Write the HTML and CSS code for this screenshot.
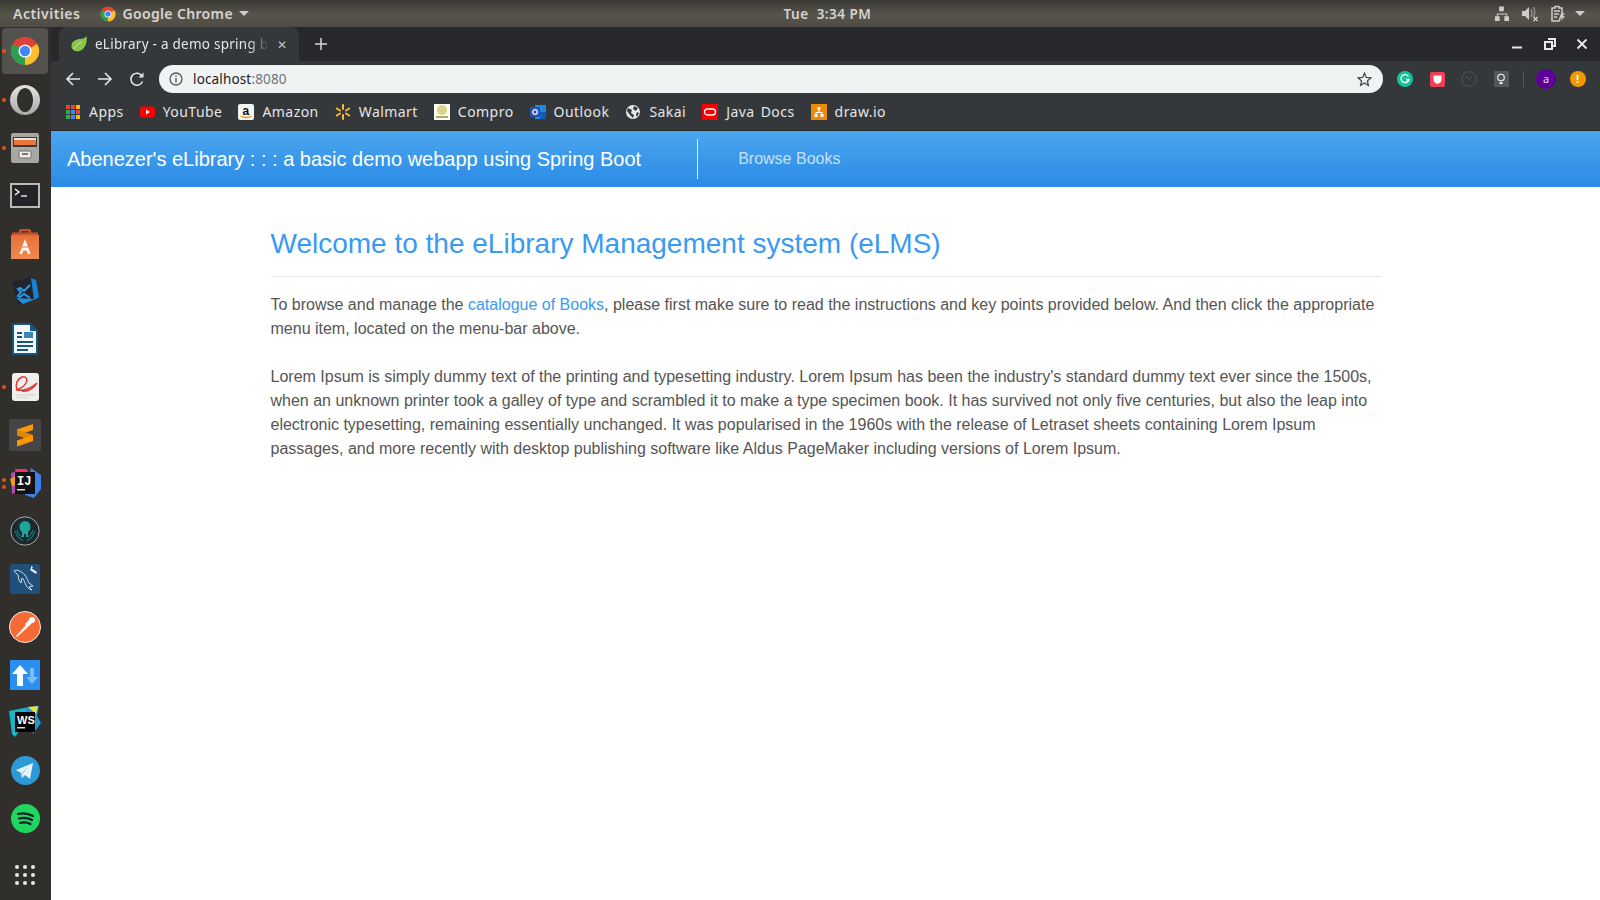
FILE: index.html
```html
<!DOCTYPE html>
<html lang="en">
<head>
    <meta charset="UTF-8">
    <title>eLibrary - a demo spring b</title>
    <link rel="stylesheet" href="styles.css">
</head>
<body>
    <svg class="defs" width="0" height="0">
        <defs>
            <linearGradient id="operaRing" x1="0" y1="0" x2="0" y2="1">
                <stop offset="0" stop-color="#e4e4e4"/>
                <stop offset="1" stop-color="#a8a8a8"/>
            </linearGradient>
            <linearGradient id="bagFill" x1="0" y1="0" x2="0" y2="1">
                <stop offset="0" stop-color="#e8703a"/>
                <stop offset="1" stop-color="#f08a50"/>
            </linearGradient>
        </defs>
        <symbol id="chrome" viewBox="0 0 32 32">
            <circle cx="16" cy="16" r="15" fill="#db4437"/>
            <path d="M16 16 L29 8.500 A15 15 0 0 1 16 31 Z" fill="#fbc02d"/>
            <path d="M16 16 L16 31 A15 15 0 0 1 3 8.500 Z" fill="#2e9e4f"/>
            <circle cx="16" cy="16" r="7" fill="#fff"/>
            <circle cx="16" cy="16" r="5.500" fill="#4285f4"/>
        </symbol>
    </svg>

    <div id="topbar">
        <div class="top-left">
            <span class="activities">Activities</span>
            <svg class="top-chrome" width="16" height="16"><use href="#chrome"/></svg>
            <span class="app-name">Google Chrome</span>
            <i class="caret"></i>
        </div>
        <div class="clock">Tue&nbsp; 3:34 PM</div>
        <div class="top-right">
            <svg width="15" height="16" viewBox="0 0 16 16" fill="#cfcdc8"><path d="M5.500 0h5v5h-2v2.500h5.500v3h2v5h-5v-5h2v-2h-9v2h2v5h-5v-5h2v-3h5.500v-2.500h-3z"/></svg>
            <svg width="18" height="16" viewBox="0 0 18 16" fill="#cfcdc8"><path d="M1 5h3l4-4v13l-4-4h-3z"/><path d="M10 3q2 4 0 8M12.500 1q2.500 5 0 10" fill="none" stroke="#8c8a85" stroke-width="1.500"/><path d="M12.500 11l4 4m0-4l-4 4" stroke="#cfcdc8" stroke-width="1.500"/></svg>
            <svg width="15" height="17" viewBox="0 0 15 17"><path d="M4 1.500h4v1.500h3v5l-3 8h-7v-13h3z" fill="none" stroke="#cfcdc8" stroke-width="1.500"/><path d="M3 6h6M3 9h5M3 12h3" stroke="#cfcdc8" stroke-width="1.300"/><path d="M12 8l-3 4.500h2l-1 3.500 4-5h-2l1.500-3z" fill="#cfcdc8"/></svg>
            <i class="caret caret-right"></i>
        </div>
    </div>

    <div id="desktop">
        <div id="dock">
            <div class="dock-item active"><i class="dot"></i>
                <svg width="30" height="30"><use href="#chrome"/></svg>
            </div>
            <div class="dock-item"><i class="dot"></i>
                <svg width="30" height="30" viewBox="0 0 30 30"><path fill-rule="evenodd" d="M15 0a15 15 0 1 0 .01 0zM15 3a8 12 0 1 0 .01 0z" fill="url(#operaRing)"/></svg>
            </div>
            <div class="dock-item"><i class="dot"></i>
                <svg width="28" height="30" viewBox="0 0 28 30"><rect width="28" height="30" rx="2" fill="#a9a7a2"/><rect x="2" y="4" width="24" height="10" fill="#3c3a37"/><rect x="3" y="5" width="22" height="3" fill="#e9e4da"/><rect x="3" y="7" width="22" height="5" fill="#e8763d"/><rect x="8" y="18" width="12" height="7" rx="1" fill="#eeeeea" stroke="#6e6c68"/><rect x="11" y="20" width="6" height="2" fill="#77756f"/></svg>
            </div>
            <div class="dock-item">
                <svg width="30" height="25" viewBox="0 0 30 25"><rect x="1" y="1" width="28" height="23" fill="#222427" stroke="#b9b9b6" stroke-width="2"/><path d="M5 6l4 3-4 3" fill="none" stroke="#fff" stroke-width="1.300"/><path d="M11 13h6" stroke="#fff" stroke-width="1.300"/></svg>
            </div>
            <div class="dock-item">
                <svg width="28" height="30" viewBox="0 0 28 30"><path d="M9 7v-4q0-2 2-2h6q2 0 2 2v4" fill="none" stroke="#c9522a" stroke-width="2.500"/><path d="M1 3.500h26v3h-26z" fill="#c9522a"/><path d="M0 6h28v24h-28z" fill="url(#bagFill)"/><path d="M14 10l5.500 15h-2.500l-1.200-3.500h-3.600l-1.200 3.500h-2.500z" fill="#fff"/><path d="M7 18h14" stroke="#f08a50" stroke-width="1.200"/></svg>
            </div>
            <div class="dock-item">
                <svg width="27" height="28" viewBox="0 0 27 28"><path d="M0 5l19-5 5 4 3 16-5 3-16 5z" fill="#1f2530"/><path d="M19 1l5 2 3 17-5 3z" fill="#1683d0"/><path d="M4 21l18 1 4-1-15 6z" fill="#1e8fd8"/><path d="M18 8l-6 6-4-3-2 1 3 3-3 4 2 1 4-3 6 4" fill="none" stroke="#2a9be0" stroke-width="2"/></svg>
            </div>
            <div class="dock-item">
                <svg width="26" height="32" viewBox="0 0 26 32"><path d="M1 1h17l7 7v23h-24z" fill="#f4f6f7" stroke="#17577f" stroke-width="2"/><path d="M18 1l7 7h-7z" fill="#17577f"/><rect x="5" y="9" width="5" height="2" fill="#17577f"/><rect x="5" y="13" width="5" height="2" fill="#17577f"/><rect x="12" y="9" width="9" height="6" fill="#3a86b7"/><rect x="5" y="18" width="16" height="2" fill="#17577f"/><rect x="5" y="22" width="16" height="2" fill="#17577f"/><rect x="5" y="26" width="11" height="2" fill="#17577f"/></svg>
            </div>
            <div class="dock-item"><i class="dot"></i>
                <svg width="27" height="28" viewBox="0 0 27 28"><rect width="27" height="28" rx="3" fill="#efefed"/><path d="M5 17c-2-5 0-11 5-13 4-1 6 2 4 6s-7 6-10 7c6 1 15-1 21-7-3 5-9 9-15 8" fill="none" stroke="#dc3f3c" stroke-width="1.500"/><rect x="4" y="21.500" width="19" height="1" fill="#cfcfcd"/><rect x="4" y="24" width="13" height="1" fill="#d8d8d6"/></svg>
            </div>
            <div class="dock-item">
                <svg width="32" height="32" viewBox="0 0 32 32"><rect width="32" height="32" rx="2" fill="#454545"/><path d="M24 5v6L8 16.500v-6z" fill="#ff9800"/><path d="M8 10.500l16 5.500v6L8 16.500z" fill="#e08600"/><path d="M24 16v6L8 27.500v-6z" fill="#ff9800"/></svg>
            </div>
            <div class="dock-item two-dots"><i class="dot"></i><i class="dot dot-b"></i>
                <svg width="32" height="32" viewBox="0 0 32 32"><path d="M2 6l10-3-2 22-7 2z" fill="#b04fa8"/><path d="M6 2l12 0 2 6-12 8z" fill="#f0306e"/><path d="M1 12l6-3 2 9-6 1z" fill="#f49a20"/><path d="M22 1l10 7v14l-7 9-9-3z" fill="#3f7de8"/><rect x="6" y="5" width="20" height="22" fill="#111"/><text x="8" y="18" class="ij-text">IJ</text><rect x="8" y="22" width="8" height="1.500" fill="#ddd"/></svg>
            </div>
            <div class="dock-item">
                <svg width="30" height="30" viewBox="0 0 30 30"><circle cx="15" cy="15" r="14.200" fill="#1a2a30" stroke="#a8aaa9" stroke-width="1"/><path d="M15 5c3.500 0 5.500 3 5.500 6 0 2-1 4-2.500 5v5h-2v-3h-2v3h-2v-5c-1.500-1-2.500-3-2.500-5 0-3 2-6 5.500-6z" fill="#1fa498"/><path d="M5 15q2 7 8 10M25 15q-2 7-8 10M7 14q1 5 5 7M23 14q-1 5-5 7" fill="none" stroke="#1a8d84" stroke-width="1"/></svg>
            </div>
            <div class="dock-item">
                <svg width="30" height="30" viewBox="0 0 30 30"><rect width="30" height="30" rx="3" fill="#21507a"/><path d="M4 7c3-2 7 0 11 4 2 3 3 6 4 8l4 3-4 1 3 3c-4-1-6-4-7-7-1-2-1-4-3-5l-1 5-2-3-1-5z" fill="none" stroke="#cfdde8" stroke-width="1"/><path d="M21 4l6 4-1 2-6-4zM21 2l2 1-2 3z" fill="#e4ecf1"/></svg>
            </div>
            <div class="dock-item">
                <svg width="32" height="32" viewBox="0 0 32 32"><circle cx="16" cy="16" r="15.500" fill="#f76935" stroke="#f5ede6"/><path d="M7 25l10-11 2 2-11 10z" fill="#fff"/><path d="M16 13l6-6 3 3-6 6z" fill="#fff"/><circle cx="23" cy="9" r="3" fill="#fff"/></svg>
            </div>
            <div class="dock-item">
                <svg width="30" height="30" viewBox="0 0 30 30"><rect width="30" height="30" rx="1" fill="#2a8fef"/><path d="M10 5l8 9h-5v12h-6v-12h-5z" fill="#fff"/><path d="M20 8h4v9h4l-6 7-6-7h4z" fill="#7ebcf5"/></svg>
            </div>
            <div class="dock-item">
                <svg width="32" height="32" viewBox="0 0 32 32"><path d="M0 5l20-4 3 5-17 25-3-3z" fill="#18b6c9"/><path d="M16 2l14-2-2 10 4 7-8 11z" fill="#1e9bd6"/><path d="M19 1l10-1-2 8z" fill="#e8e54a"/><rect x="6" y="6" width="20" height="20" fill="#000"/><text x="8" y="18" class="ws-text">WS</text><rect x="8" y="21" width="8" height="1.500" fill="#ddd"/></svg>
            </div>
            <div class="dock-item">
                <svg width="29" height="29" viewBox="0 0 29 29"><circle cx="14.500" cy="14.500" r="14.500" fill="#2c9ad6"/><path d="M5 14l17-7-3 16-5-4-3 3-1-5z" fill="#e8f4fb"/><path d="M10 17l8-7-6 8-1 4z" fill="#bcd9ea"/></svg>
            </div>
            <div class="dock-item">
                <svg width="29" height="29" viewBox="0 0 29 29"><circle cx="14.500" cy="14.500" r="14.500" fill="#1ed760"/><path d="M7 10q8-2 15 2M8 14.500q7-2 13 1.500M9 19q5.500-1.500 10.500 1" fill="none" stroke="#16202a" stroke-width="2.200" stroke-linecap="round"/></svg>
            </div>
            <div class="dock-item show-apps">
                <svg width="20" height="20" viewBox="0 0 20 20" fill="#e6e5e2"><circle cx="2" cy="2" r="2"/><circle cx="10" cy="2" r="2"/><circle cx="18" cy="2" r="2"/><circle cx="2" cy="10" r="2"/><circle cx="10" cy="10" r="2"/><circle cx="18" cy="10" r="2"/><circle cx="2" cy="18" r="2"/><circle cx="10" cy="18" r="2"/><circle cx="18" cy="18" r="2"/></svg>
            </div>
        </div>

        <div id="window">
            <div id="tabstrip">
                <div class="tab">
                    <svg width="16" height="16" viewBox="0 0 16 16"><path d="M15.500 0c1 6-1 13-7 15-4 1-8-1-8-5 0-5 5-7 9-7 2 0 5-1 6-3z" fill="#8bc34a"/><path d="M3 13c2-4 5-6 8-7" fill="none" stroke="#d9efb5" stroke-width=".8"/></svg>
                    <span class="tab-title">eLibrary - a demo spring b</span>
                    <span class="tab-close">&#x2715;</span>
                </div>
                <svg class="new-tab" width="12" height="12" viewBox="0 0 12 12"><path d="M6 0v12M0 6h12" stroke="#d5d7d9" stroke-width="1.500"/></svg>
                <div class="win-btns">
                    <svg width="12" height="12" viewBox="0 0 12 12"><path d="M1 9.500h10" stroke="#e8e8e8" stroke-width="2"/></svg>
                    <svg width="12" height="12" viewBox="0 0 12 12"><path d="M4 1h7v7h-3M1 4h7v7h-7z" fill="none" stroke="#e8e8e8" stroke-width="2"/></svg>
                    <svg width="12" height="12" viewBox="0 0 12 12"><path d="M1.500 1.500l9 9m0-9l-9 9" stroke="#e8e8e8" stroke-width="1.800"/></svg>
                </div>
            </div>

            <div id="toolbar">
                <svg class="nav-icon" width="16" height="16" viewBox="0 0 16 16"><path d="M15 8h-13M8 2l-6 6 6 6" fill="none" stroke="#e4e6e8" stroke-width="1.600"/></svg>
                <svg class="nav-icon" width="16" height="16" viewBox="0 0 16 16"><path d="M1 8h13M8 2l6 6-6 6" fill="none" stroke="#e4e6e8" stroke-width="1.600"/></svg>
                <svg class="nav-icon reload" width="16" height="16" viewBox="0 0 16 16"><path d="M13.500 10.500a6 6 0 1 1-.5-5.500" fill="none" stroke="#e4e6e8" stroke-width="1.600"/><path d="M14.500 1.500v5h-5z" fill="#e4e6e8"/></svg>
                <div id="omnibox">
                    <svg width="14" height="14" viewBox="0 0 14 14"><circle cx="7" cy="7" r="6" fill="none" stroke="#55585c" stroke-width="1.300"/><path d="M7 6v4.500M7 3.200v1.600" stroke="#55585c" stroke-width="1.400"/></svg>
                    <span class="url">localhost<span class="port">:8080</span></span>
                    <svg class="star" width="15" height="15" viewBox="0 0 15 15"><path d="M7.500 1.300l1.800 4.200 4.500.4-3.400 3 1 4.400-3.900-2.300-3.900 2.300 1-4.400-3.400-3 4.500-.4z" fill="none" stroke="#46494d" stroke-width="1.300"/></svg>
                </div>
                <div class="extensions">
                    <svg width="16" height="16" viewBox="0 0 16 16"><circle cx="8" cy="8" r="8" fill="#15c39a"/><path d="M11.500 5.500a4 4 0 1 0 .5 3h-3" fill="none" stroke="#fff" stroke-width="1.400"/></svg>
                    <svg width="15" height="15" viewBox="0 0 15 15"><rect width="15" height="15" rx="2" fill="#ef3f56"/><path d="M3.500 3.500h8v4q0 3-4 4.500-4-1.500-4-4.500z" fill="#fff"/></svg>
                    <svg width="16" height="16" viewBox="0 0 16 16"><circle cx="8" cy="8" r="7.300" fill="none" stroke="#55585b" stroke-width="1"/><path d="M4.500 5l3.500 3.500 3-4" fill="none" stroke="#55585b"/></svg>
                    <svg width="15" height="16" viewBox="0 0 15 16"><rect width="15" height="16" rx="1" fill="#55585b"/><circle cx="7" cy="6.500" r="3.300" fill="none" stroke="#f0f0f0" stroke-width="1.100"/><path d="M5.500 11h3v2h-3z" fill="#f0f0f0"/></svg>
                    <i class="ext-sep"></i>
                    <span class="avatar">a</span>
                    <span class="alert">!</span>
                </div>
            </div>

            <div id="bookmarks">
                <a class="bm"><span class="apps-icon"><i class="c1"></i><i class="c2"></i><i class="c3"></i><i class="c4"></i><i class="c5"></i><i class="c6"></i><i class="c7"></i><i class="c8"></i><i class="c9"></i></span>Apps</a>
                <a class="bm"><svg width="15" height="16" viewBox="0 0 15 16"><rect y="2.500" width="15" height="11" rx="3" fill="#f00"/><path d="M6 5.500l4 2.500-4 2.500z" fill="#fff"/></svg>YouTube</a>
                <a class="bm"><svg width="16" height="16" viewBox="0 0 16 16"><rect width="16" height="16" rx="2" fill="#f4f4f4"/><path d="M2.500 12q5.500 3 11 0" fill="none" stroke="#f90" stroke-width="1.300"/><text x="8" y="10.500" class="amz-text">a</text></svg>Amazon</a>
                <a class="bm"><svg width="16" height="16" viewBox="0 0 16 16" stroke="#fdbb30" stroke-width="2" stroke-linecap="round"><path d="M8 1v4M8 11v4M1.800 4.500l3.200 2M14.200 4.500l-3.200 2M1.800 11.500l3.200-2M14.200 11.500l-3.200-2"/></svg>Walmart</a>
                <a class="bm"><svg width="16" height="16" viewBox="0 0 16 16"><rect width="16" height="16" fill="#fbfbf0"/><circle cx="8" cy="6" r="5" fill="#d9d58a"/><path d="M2 12h12v2h-12z" fill="#a9a876"/></svg>Compro</a>
                <a class="bm"><svg width="16" height="16" viewBox="0 0 16 16"><rect x="5" y="1" width="11" height="14" fill="#1f8ae0"/><rect x="10" y="8" width="6" height="7" fill="#0f5fb8"/><rect y="3" width="10" height="10" fill="#2750b3"/><circle cx="5" cy="8" r="2.300" fill="none" stroke="#fff" stroke-width="1.300"/></svg>Outlook</a>
                <a class="bm"><svg width="16" height="16" viewBox="0 0 16 16"><circle cx="8" cy="8" r="7" fill="#e8e8e8"/><path d="M3 4l4 2-1 3 3 2-1 3-3-3-3-4zM9 2l4 2-2 3-3-2zM12 8l2 1-2 4-1-2z" fill="#35383b"/></svg>Sakai</a>
                <a class="bm"><svg width="16" height="16" viewBox="0 0 16 16"><rect width="16" height="16" rx="1" fill="#f80000"/><rect x="2.500" y="5" width="11" height="6" rx="3" fill="none" stroke="#fff" stroke-width="1.300"/></svg>Java Docs</a>
                <a class="bm"><svg width="16" height="16" viewBox="0 0 16 16"><rect width="16" height="16" fill="#f08705"/><path d="M6.500 3h3v3h-1v2h3v2h1v3h-3v-3h1v-1h-5v1h1v3h-3v-3h1v-2h3v-2h-1z" fill="#fff"/></svg>draw.io</a>
            </div>

            <div id="navbar">
                <div class="brand">Abenezer's eLibrary : : : a basic demo webapp using Spring Boot</div>
                <div class="nav-links"><a>Browse Books</a></div>
            </div>

            <div id="content">
                <h1>Welcome to the eLibrary Management system (eLMS)</h1>
                <p>To browse and manage the <a>catalogue of Books</a>, please first make sure to read the instructions and key points provided below. And then click the appropriate menu item, located on the menu-bar above.</p>
                <p>Lorem Ipsum is simply dummy text of the printing and typesetting industry. Lorem Ipsum has been the industry's standard dummy text ever since the 1500s, when an unknown printer took a galley of type and scrambled it to make a type specimen book. It has survived not only five centuries, but also the leap into electronic typesetting, remaining essentially unchanged. It was popularised in the 1960s with the release of Letraset sheets containing Lorem Ipsum passages, and more recently with desktop publishing software like Aldus PageMaker including versions of Lorem Ipsum.</p>
            </div>
        </div>
    </div>
</body>
</html>
```

FILE: styles.css
```css
*{
    margin: 0;
    padding: 0;
    box-sizing: border-box;
}
html,body{
    width: 1600px;
    height: 900px;
    overflow: hidden;
}
body{
    display: flex;
    flex-direction: column;
    font-family: "Noto Sans", "Open Sans", sans-serif;
    background: #fff;
}
.defs{
    position: absolute;
}

/* gnome top bar */
#topbar{
    height: 27px;
    flex: none;
    display: grid;
    grid-template-columns: 1fr auto 1fr;
    align-items: center;
    padding: 0 15px 0 13px;
    background: linear-gradient(#3b3934, #57544c 55%, #4f4c45);
    color: #d6d4cf;
    font-size: 14px;
    font-weight: 600;
    letter-spacing: .5px;
}
.top-left{
    display: flex;
    align-items: center;
}
.activities{
    margin-right: 20px;
}
.top-chrome{
    margin-right: 6px;
}
.app-name{
    letter-spacing: .35px;
}
.caret{
    width: 0;
    height: 0;
    border: 5px solid transparent;
    border-top: 5px solid #cfcdc8;
    border-bottom: 0;
    margin-left: 6px;
}
.caret-right{
    margin-left: -3px;
}
.clock{
    font-size: 13.5px;
    margin-left: 57px;
}
.top-right{
    display: flex;
    align-items: center;
    justify-content: flex-end;
    gap: 12px;
}

#desktop{
    flex: 1;
    display: flex;
    min-height: 0;
}

/* launcher */
#dock{
    width: 51px;
    flex: none;
    display: flex;
    flex-direction: column;
    background: #312f2b;
    padding: 1px 0 0 2px;
}
.dock-item{
    position: relative;
    width: 46px;
    height: 47.900px;
    flex: none;
    display: flex;
    align-items: center;
    justify-content: center;
}
.dock-item.active{
    background: #54524e;
    border-radius: 4px;
    height: 46px;
    margin-bottom: 1.900px;
}
.dot{
    position: absolute;
    left: 0;
    top: 50%;
    width: 4px;
    height: 4px;
    margin-top: -2px;
    border-radius: 50%;
    background: #e0531f;
}
.two-dots .dot{
    margin-top: -5px;
}
.two-dots .dot-b{
    margin-top: 2px;
}
.ij-text{
    fill: #fff;
    font: 700 12px "Liberation Mono", monospace;
}
.ws-text{
    fill: #fff;
    font: 700 11px "Liberation Sans", sans-serif;
}
.show-apps{
    margin-top: auto;
    margin-bottom: 1px;
}

/* browser window */
#window{
    flex: 1;
    min-width: 0;
    display: flex;
    flex-direction: column;
}
#tabstrip{
    height: 34px;
    flex: none;
    display: flex;
    align-items: center;
    background: #26282b;
    padding-left: 8px;
}
.tab{
    width: 240px;
    height: 34px;
    display: flex;
    align-items: center;
    padding: 0 12px;
    background: #35383b;
    border-radius: 8px 8px 0 0;
    color: #e4e6e8;
    font-size: 13.5px;
    letter-spacing: .25px;
}
.tab-title{
    flex: 1;
    margin-left: 8px;
    white-space: nowrap;
    overflow: hidden;
    -webkit-mask-image: linear-gradient(to right, #000 88%, transparent);
    mask-image: linear-gradient(to right, #000 88%, transparent);
}
.tab-close{
    font-size: 12px;
    color: #c2c4c6;
    margin-left: 8px;
}
.new-tab{
    margin-left: 16px;
}
.win-btns{
    margin-left: auto;
    display: flex;
    gap: 20.500px;
    padding-right: 12px;
}
#toolbar{
    height: 36px;
    flex: none;
    display: flex;
    align-items: center;
    padding-left: 14px;
    background: #35383b;
}
.nav-icon{
    margin-right: 16px;
}
.nav-icon.reload{
    margin-right: 14px;
}
#omnibox{
    width: 1224px;
    height: 28px;
    flex: none;
    display: flex;
    align-items: center;
    padding: 0 11px 0 10px;
    background: #f0f3f4;
    border-radius: 14px;
    font-size: 13.5px;
    color: #202124;
}
.url{
    margin-left: 10px;
    letter-spacing: .15px;
}
.port{
    color: #70757a;
}
.star{
    margin-left: auto;
}
.extensions{
    flex: 1;
    display: flex;
    align-items: center;
    gap: 16.500px;
    padding-left: 14px;
}
.ext-sep{
    width: 1px;
    height: 16px;
    background: #55585b;
    margin: 0 -4px 0 -2.500px;
}
.avatar,.alert{
    width: 20px;
    height: 20px;
    border-radius: 50%;
    background: #5c0099;
    color: #e6d8f0;
    font-size: 11px;
    line-height: 20px;
    text-align: center;
}
.alert{
    width: 16px;
    height: 16px;
    margin-left: -3px;
    line-height: 16px;
    background: #f29900;
    color: #fff;
    font-weight: 700;
}
#bookmarks{
    height: 34px;
    flex: none;
    display: flex;
    align-items: center;
    gap: 16px;
    padding: 0 0 4px 15px;
    background: #35383b;
    border-bottom: 1px solid #26282b;
    color: #e4e6e8;
    font-size: 14px;
    letter-spacing: .45px;
    word-spacing: 2px;
}
.bm{
    display: flex;
    align-items: center;
    gap: 8px;
}
.apps-icon{
    display: grid;
    grid-template-columns: repeat(3, 4px);
    grid-auto-rows: 4px;
    gap: 1px;
    margin-right: 1px;
}
.c1{background: #ea4335;}
.c2{background: #ea4335;}
.c3{background: #fbbc05;}
.c4{background: #34a853;}
.c5{background: #4285f4;}
.c6{background: #ea4335;}
.c7{background: #34a853;}
.c8{background: #4285f4;}
.c9{background: #fbbc05;}
.amz-text{
    font: 700 12px "Liberation Sans", sans-serif;
    fill: #111;
    text-anchor: middle;
}

/* page itself */
#navbar{
    height: 56px;
    flex: none;
    display: flex;
    align-items: center;
    padding-left: 16px;
    background: linear-gradient(#4ba6ee, #2a8ae6);
    font-family: "Liberation Sans", Arial, sans-serif;
}
.brand{
    font-size: 20px;
    color: #fff;
    white-space: nowrap;
    padding-right: 56px;
    height: 40px;
    line-height: 40px;
    border-right: 1px solid #e3f0fb;
}
.nav-links{
    padding-left: 40px;
    font-size: 16px;
    color: #c6e0f8;
}
#content{
    flex: 1;
    padding: 0 219px 0 219.500px;
    font-family: "Liberation Sans", Arial, sans-serif;
    font-size: 16px;
    line-height: 24px;
    color: #555;
}
#content h1{
    font-size: 28px;
    font-weight: 400;
    line-height: 34px;
    color: #3a9af0;
    margin-top: 40px;
    padding-bottom: 15px;
    border-bottom: 1px solid #e5e5e5;
    margin-bottom: 16px;
}
#content p{
    margin-bottom: 24px;
}
#content a{
    color: #3a9af0;
}
```
